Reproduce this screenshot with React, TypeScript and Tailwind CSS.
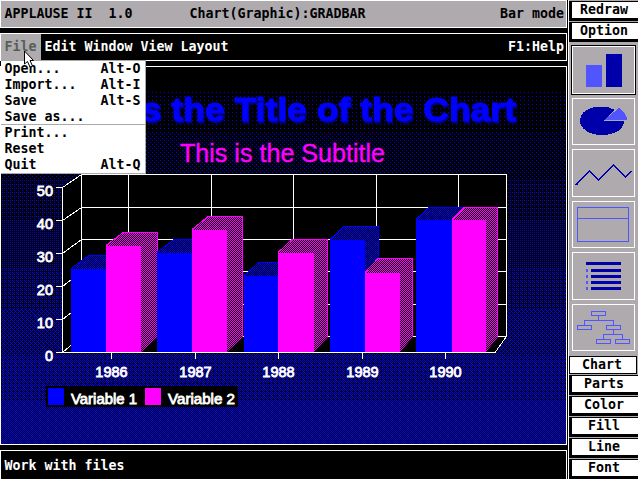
import type { ReactNode } from 'react';

const GRID = [174.5, 207.5, 239.5, 271.5, 304.5, 336.5];
const TICKS = [187.5, 220.5, 253.5, 286.5, 319.5, 352.5];
const YEARS = [111.5, 195.5, 278.5, 362.5, 445.5];
const BANDS = [90, 134, 178, 222, 267, 311, 355, 400, 444];
const DITHER = [[0, 0], [2, 2], [2, 0], [0, 2], [1, 1], [3, 3], [3, 1], [1, 3]];

interface Bar {
  x: number;
  w: number;
  y: number;
  dx: number;
  dy: number;
  kind: 'b' | 'm';
}

const BARS: Bar[] = [
  { x: 71, w: 36, y: 269, dx: 18, dy: 14, kind: 'b' },
  { x: 106, w: 35, y: 246, dx: 17, dy: 14, kind: 'm' },
  { x: 157, w: 36, y: 253, dx: 17, dy: 14, kind: 'b' },
  { x: 192, w: 35, y: 230, dx: 16, dy: 14, kind: 'm' },
  { x: 244, w: 35, y: 276, dx: 15, dy: 14, kind: 'b' },
  { x: 278, w: 36, y: 253, dx: 14, dy: 14, kind: 'm' },
  { x: 330, w: 35, y: 240, dx: 14, dy: 14, kind: 'b' },
  { x: 365, w: 35, y: 273, dx: 13, dy: 15, kind: 'm' },
  { x: 416, w: 36, y: 220, dx: 13, dy: 13, kind: 'b' },
  { x: 452, w: 34, y: 220, dx: 12, dy: 13, kind: 'm' },
];

// One dashed hairline per pixel row; `step` is the row spacing.
function rows(x1: number, x2: number, y1: number, y2: number, phase: number, step: number) {
  let d = '';
  for (let y = y1; y < y2; y++) {
    if (y % step === phase) d += `M${x1} ${y + 0.5}H${x2}`;
  }
  return d;
}

function Bar3D({ x, w, y, dx, dy, kind }: Bar) {
  const c = kind === 'b' ? '#0000ff' : '#ff00ff';
  const r = x + w;
  const x0 = x - (x % 2);
  const outline = `${x},${y} ${x + dx},${y - dy} ${r + dx},${y - dy} ${r + dx},337 ${r},352 ${r},${y}`;
  return (
    <g>
      <clipPath id={`clip-${x}`}>
        <polygon points={outline} />
      </clipPath>
      <polygon points={outline} fill="#000" />
      <g clipPath={`url(#clip-${x})`} stroke={c} strokeDasharray="1 1">
        <path d={rows(x0, r + dx, y - dy, 352, 0, 2)} />
        <path d={rows(x0 + 1, r + dx, y - dy, 352, 1, 2)} />
      </g>
      <path d={`M${x} ${y - 0.5}L${x + dx} ${y - dy + 0.5}H${r + dx - 0.5}V337`} stroke={c} fill="none" />
      <rect x={x} y={y} width={w} height={352 - y} fill={c} />
    </g>
  );
}

function ChartCanvas() {
  return (
    <svg viewBox="1 67 565 377" width="565" height="377" className="block font-normal" fontFamily="'Liberation Sans', Arial, sans-serif">
      <rect x="1" y="67" width="565" height="377" fill="#000" />
      <g shapeRendering="crispEdges">
        <g stroke="#0000ff" strokeDasharray="1 3">
          {BANDS.slice(0, 8).map((top, i) =>
            DITHER.slice(0, i + 1).map(([px, py]) => (
              <path key={`${top}-${px}-${py}`} d={rows(px + (px === 0 ? 4 : 0), 566, top, BANDS[i + 1], py, 4)} />
            )),
          )}
        </g>
        <polygon points="81,174 507,174 507,337 495,353 62,353 62,187" fill="#000" />
        <g stroke="#fff" fill="none">
          {GRID.map((y) => <path key={y} d={`M81 ${y}H507`} />)}
          {[81.5, 128.5, 211.5, 293.5, 376.5, 458.5, 506.5].map((x) => <path key={x} d={`M${x} 174V337`} />)}
          {TICKS.map((y, i) => <path key={y} d={`M56 ${y}H62.5L81.5 ${GRID[i]}`} />)}
          <path d="M62.5 187V353M506.5 336.5L495 352.5" />
        </g>
        {BARS.map((b) => <Bar3D key={b.x} {...b} />)}
        <path d="M57 352.5H495" stroke="#fff" />
        {YEARS.map((x) => <path key={x} d={`M${x} 353V359`} stroke="#fff" />)}
        <rect x="46" y="386" width="192" height="21" fill="#000" />
        <rect x="48" y="388" width="16" height="17" fill="#0000ff" />
        <rect x="145" y="388" width="16" height="17" fill="#ff00ff" />
      </g>
      <text x="49" y="121" fontSize="33" fontWeight="700" textLength="467" lengthAdjust="spacingAndGlyphs" fill="#0000ff" stroke="#0000ff" strokeWidth="1" className="drop-shadow-[1px_2px_0_#000090]">This is the Title of the Chart</text>
      <text x="180" y="162" fontSize="25" textLength="205" lengthAdjust="spacingAndGlyphs" fill="#ff00ff" stroke="#ff00ff" strokeWidth="0.4">This is the Subtitle</text>
      <g fill="#fff" stroke="#fff" strokeWidth="0.8" fontSize="14.5">
        {TICKS.map((y, i) => <text key={y} x="53" y={y + 8} textAnchor="end">{50 - i * 10}</text>)}
        {YEARS.map((x, i) => <text key={x} x={x} y="377" textAnchor="middle">{1986 + i}</text>)}
        <text x="71" y="404" textLength="66" lengthAdjust="spacingAndGlyphs">Variable 1</text>
        <text x="168" y="404" textLength="67" lengthAdjust="spacingAndGlyphs">Variable 2</text>
      </g>
    </svg>
  );
}

const MENU: [string, string][][] = [
  [['Open...', 'Alt-O'], ['Import...', 'Alt-I'], ['Save', 'Alt-S'], ['Save as...', '']],
  [['Print...', ''], ['Reset', ''], ['Quit', 'Alt-Q']],
];

function FileMenu() {
  return (
    <div className="absolute left-px top-[60px] h-[114px] w-[145px] border-y border-r border-[#aaa] bg-white text-black">
      {MENU.map((group, i) => (
        <div key={i} className={i === 0 ? 'h-[64px] border-b border-[#aaa]' : ''}>
          {group.map(([label, key]) => (
            <div key={label} className="flex h-4 items-center justify-between pl-[3.5px] pr-[4.5px]">
              <span>{label}</span>
              <span>{key}</span>
            </div>
          ))}
        </div>
      ))}
    </div>
  );
}

function SideButton({ label }: { label: string }) {
  return (
    <div className="flex h-5 w-[69px] shrink-0 flex-col bg-black pb-[3px] pl-[3px] pt-px">
      <div className="flex h-4 items-center justify-center bg-white pr-[2px] text-black">{label}</div>
    </div>
  );
}

function IconBox({ h, children, selected = false }: { h: string; children: ReactNode; selected?: boolean }) {
  return (
    <div className={`ml-[3px] w-[63px] shrink-0 border border-white ${h} ${selected ? 'outline outline-black' : ''}`}>
      {children}
    </div>
  );
}

const Drawing = ({ box, children }: { box: string; children: ReactNode }) => (
  <svg viewBox={box} className="block h-full w-full" preserveAspectRatio="none" shapeRendering="crispEdges" fill="none">
    {children}
  </svg>
);

export default function App() {
  return (
    <div className="relative flex h-[479px] w-[638px] overflow-hidden bg-black font-['DejaVu_Sans_Mono',monospace] text-[13.29px] font-bold leading-4">
      <main className="flex w-[567px] flex-col">
        <header className="flex h-7 shrink-0 items-center border border-white bg-[#aeaaae] pl-[3.5px] pr-0.5 text-black">
          <span className="w-[185px] whitespace-pre">APPLAUSE II  1.0</span>
          <span>Chart(Graphic):GRADBAR</span>
          <span className="ml-auto">Bar mode</span>
        </header>
        <nav className="mt-[5px] flex h-7 shrink-0 items-center border border-white pr-0.5 text-white">
          <span className="flex h-full w-[40px] items-center bg-[#aeaaae] pl-[3.5px] text-[#556055]">File</span>
          <span className="ml-[3.5px]">Edit</span>
          <span className="ml-2">Window</span>
          <span className="ml-2">View</span>
          <span className="ml-2">Layout</span>
          <span className="ml-auto">F1:Help</span>
        </nav>
        <section className="mt-[5px] h-[379px] shrink-0 border border-white">
          <ChartCanvas />
        </section>
        <footer className="mt-[5px] flex h-[30px] shrink-0 items-center border border-b-0 border-white pl-[3.5px] text-white">Work with files</footer>
      </main>

      <aside className="ml-px flex w-[70px] flex-col border-l border-white bg-[#aeaaae]">
        <div className="flex flex-col gap-px pt-px">
          <SideButton label="Redraw" />
          <SideButton label="Option" />
        </div>
        <div className="mt-1 flex flex-col gap-1">
          <IconBox h="h-12" selected>
            <Drawing box="573 47 61 46">
              <path d="M586 65h16v22h-16z" fill="#5055ff" />
              <path d="M606 54h16v33h-16z" fill="#0000aa" />
            </Drawing>
          </IconBox>
          <IconBox h="h-[47px]">
            <Drawing box="573 99 61 45">
              <path d="M615 110C609 106 598 106 591 108C584 110 580 115 580 121C580 129 590 135 602 135C615 135 624 129 624 121H603Z" fill="#0000aa" />
              <path d="M604 120L619 108C624 111 627 115 627 120Z" fill="#5055ff" />
            </Drawing>
          </IconBox>
          <IconBox h="h-12">
            <Drawing box="573 150 61 46">
              <path d="M576 185L589.5 171L598.5 180L613.5 165L625.5 177L631 171" stroke="#0000aa" strokeWidth="1.5" />
            </Drawing>
          </IconBox>
          <IconBox h="h-[47px]">
            <Drawing box="573 202 61 45">
              <path d="M577.5 207.5h51v34h-51zM577 218.5h52" stroke="#5055ff" />
            </Drawing>
          </IconBox>
          <IconBox h="h-12">
            <Drawing box="573 253 61 46">
              <path d="M586 262h35v3h-35zM591 269h30v3h-30zM591 275h30v3h-30zM591 281h30v3h-30zM591 287h30v3h-30z" fill="#0000aa" />
              <path d="M586 269h2v3h-2zM586 275h2v3h-2zM586 281h2v3h-2zM586 287h2v3h-2z" fill="#5055ff" />
            </Drawing>
          </IconBox>
          <IconBox h="h-[47px]">
            <Drawing box="573 305 61 45">
              <path d="M591.5 311.5h14v4h-14zM577.5 325.5h14v4h-14zM606.5 325.5h14v4h-14zM596.5 339.5h14v4h-14zM615.5 339.5h14v4h-14zM598.5 316v4.500M584.500 325v-4.500h29v4.500M613.500 330v4.500M603.500 339v-4.500h19v4.500" stroke="#5055ff" />
            </Drawing>
          </IconBox>
        </div>
        <div className="mt-[5px] flex h-[18px] w-[68px] shrink-0 items-center justify-center border border-black bg-white pr-0.5 text-black">Chart</div>
        <div className="mt-px flex flex-col gap-px">
          <SideButton label="Parts" />
          <SideButton label="Color" />
          <SideButton label="Fill" />
          <SideButton label="Line" />
          <SideButton label="Font" />
        </div>
      </aside>

      <FileMenu />
      <svg className="absolute left-[24px] top-[50px]" width="12" height="18" viewBox="0 0 12 18">
        <path d="M0.500 1V14L3.500 11.500L6 17L8.500 16L6 10.500H9.500Z" fill="#fff" stroke="#000" />
      </svg>
    </div>
  );
}
